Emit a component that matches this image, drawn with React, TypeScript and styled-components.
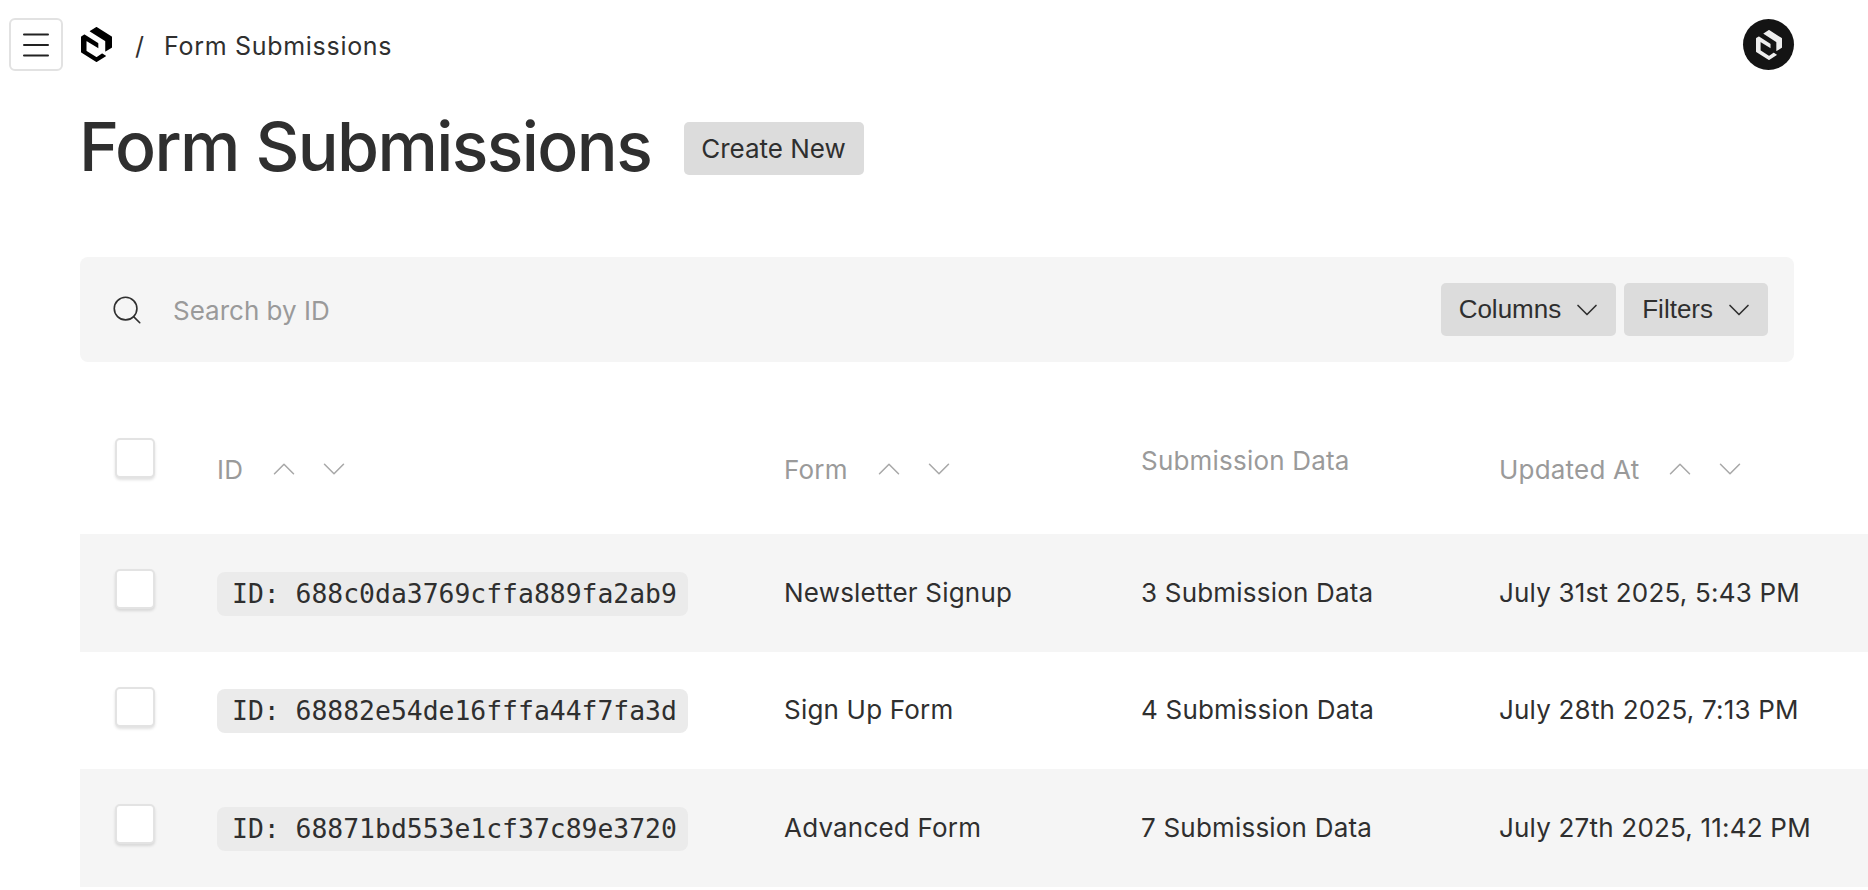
import React from "react";
import styled, { createGlobalStyle } from "styled-components";
import { ChevronDown, ChevronUp, Menu, Search } from "lucide-react";

const rows = [
  { id: "688c0da3769cffa889fa2ab9", form: "Newsletter Signup", data: "3 Submission Data", updated: "July 31st 2025, 5:43 PM" },
  { id: "68882e54de16fffa44f7fa3d", form: "Sign Up Form", data: "4 Submission Data", updated: "July 28th 2025, 7:13 PM" },
  { id: "68871bd553e1cf37c89e3720", form: "Advanced Form", data: "7 Submission Data", updated: "July 27th 2025, 11:42 PM" },
];

function Logo({ width, height }: { width: number; height: number }) {
  return (
    <svg width={width} height={height} viewBox="0 0 24 24.8" preserveAspectRatio="none" fill="currentColor">
      <path d="M11.8673 21.2336L4.40922 16.9845C4.31871 16.9309 4.25837 16.8355 4.25837 16.7282V10.1609C4.25837 10.0477 4.38508 9.97616 4.48162 10.0298L13.1404 14.9642C13.2611 15.0358 13.4121 14.9464 13.4121 14.8093V11.6091C13.4121 11.4839 13.3456 11.3647 13.2309 11.2992L2.81956 5.36353C2.71697 5.30394 2.58422 5.30394 2.48163 5.36353L0.167303 6.68231C0.0647047 6.74191 0 6.85513 0 6.97432V17.7994C0 17.9186 0.0647047 18.0318 0.167303 18.0914L11.8311 24.7389C11.9337 24.7985 12.0665 24.7985 12.1691 24.7389L19.2713 20.6924C19.3799 20.6328 19.3799 20.4778 19.2713 20.4122L16.5317 18.8479C16.4291 18.7883 16.2964 18.7883 16.1938 18.8479L12.2053 21.2336C12.1027 21.2932 11.9699 21.2932 11.8673 21.2336Z" />
      <path d="M23.8327 6.68231L12.1629 0.0447858C12.0603 -0.0148 11.9276 -0.0148 11.825 0.0447858L6.86639 2.8739C6.7578 2.9335 6.7578 3.08846 6.86639 3.15401L18.6057 9.8372C18.7024 9.89679 18.7626 9.99612 18.7626 10.1094V17.2751C18.7626 17.4064 18.9075 17.4898 19.0221 17.4242L23.8327 14.6785C23.9353 14.6189 24 14.5116 24 14.3924V6.97432C24 6.85513 23.9353 6.74191 23.8327 6.68231Z" />
    </svg>
  );
}

function SortButtons() {
  return (
    <SortGroup>
      <ChevronUp size={38} strokeWidth={0.95} />
      <ChevronDown size={38} strokeWidth={0.95} />
    </SortGroup>
  );
}

export default function App() {
  return (
    <>
      <GlobalStyle />
      <Page>
        <TopBar>
          <MenuButton>
            <Menu size={36} strokeWidth={1.35} />
          </MenuButton>
          <LogoLink>
            <Logo width={31} height={35} />
          </LogoLink>
          <Slash>/</Slash>
          <Crumb>Form Submissions</Crumb>
          <Avatar>
            <Logo width={26} height={30} />
          </Avatar>
        </TopBar>
        <Main>
          <TitleRow>
            <Title>Form Submissions</Title>
            <CreateButton>Create New</CreateButton>
          </TitleRow>
          <SearchBar>
            <Search size={34} strokeWidth={1.15} />
            <SearchText>Search by ID</SearchText>
            <PillButton>
              Columns <ChevronDown size={36} strokeWidth={1.1} />
            </PillButton>
            <PillButton>
              Filters <ChevronDown size={36} strokeWidth={1.1} />
            </PillButton>
          </SearchBar>
          <Table>
            <HeadRow>
              <CheckCell $head>
                <CheckBox />
              </CheckCell>
              <HeadCell>
                ID <SortButtons />
              </HeadCell>
              <HeadCell>
                Form <SortButtons />
              </HeadCell>
              <PlainHead>Submission Data</PlainHead>
              <HeadCell>
                Updated At <SortButtons />
              </HeadCell>
            </HeadRow>
            {rows.map((row) => (
              <Row key={row.id}>
                <CheckCell>
                  <CheckBox />
                </CheckCell>
                <Cell>
                  <IdCode>ID: {row.id}</IdCode>
                </Cell>
                <Cell>{row.form}</Cell>
                <Cell>{row.data}</Cell>
                <Cell>{row.updated}</Cell>
              </Row>
            ))}
          </Table>
        </Main>
      </Page>
    </>
  );
}

const GlobalStyle = createGlobalStyle`
  html, body {
    margin: 0;
    padding: 0;
    height: 100%;
    overflow: hidden;
    background: #fff;
    color: #2f2f2f;
    font-family: Inter, "Liberation Sans", sans-serif;
  }
`;

const Page = styled.div`
  width: 1868px;
  height: 890px;
  overflow: hidden;
`;

const TopBar = styled.header`
  display: flex;
  align-items: center;
  height: 89px;
  padding: 0 74px 0 9px;
  box-sizing: border-box;
`;

const MenuButton = styled.div`
  display: flex;
  align-items: center;
  justify-content: center;
  width: 54px;
  height: 53px;
  box-sizing: border-box;
  border: 2px solid #e2e2e2;
  border-radius: 6px;
  color: #222;
`;

const LogoLink = styled.div`
  display: flex;
  margin-left: 18px;
  color: #000;
`;

const Slash = styled.span`
  margin-left: 23px;
  padding-top: 2px;
  font-size: 25px;
`;

const Crumb = styled.span`
  margin-left: 20px;
  padding-top: 2px;
  font-size: 25px;
  letter-spacing: 0.7px;
`;

const Avatar = styled.div`
  display: flex;
  align-items: center;
  justify-content: center;
  width: 51px;
  height: 51px;
  margin-left: auto;
  border-radius: 50%;
  background: #141414;
  color: #eee;
`;

const Main = styled.main`
  padding: 21px 0 0 79px;
`;

const TitleRow = styled.div`
  display: flex;
  align-items: center;
  gap: 33px;
`;

const Title = styled.h1`
  margin: 0;
  font-size: 68px;
  line-height: 72px;
  font-weight: 500;
  letter-spacing: -1.6px;
`;

const CreateButton = styled.div`
  display: flex;
  align-items: center;
  height: 53px;
  margin-top: 5px;
  padding: 0 18px 0 17px;
  border-radius: 5px;
  background: #dcdcdc;
  font-size: 26px;
`;

const SearchBar = styled.div`
  display: flex;
  align-items: center;
  gap: 8px;
  width: 1714px;
  height: 105px;
  margin: 75px 0 0 1px;
  padding: 0 26px 0 30px;
  box-sizing: border-box;
  border-radius: 8px;
  background: #f5f5f5;
`;

const SearchText = styled.span`
  flex: 1;
  margin-left: 21px;
  padding-top: 2px;
  font-size: 26px;
  color: #9a9a9a;
`;

const PillButton = styled.div`
  display: flex;
  align-items: center;
  gap: 8px;
  height: 53px;
  padding: 0 11px 0 18px;
  box-sizing: border-box;
  border-radius: 5px;
  background: #dcdcdc;
  font-family: "Liberation Sans", sans-serif;
  font-size: 26px;
`;

const Table = styled.div`
  margin: 76px 0 0 1px;
  width: 1788px;
`;

const gridColumns = "137px 567px 357px 358px 1fr";

const HeadRow = styled.div`
  display: grid;
  grid-template-columns: ${gridColumns};
  height: 96px;
  color: #9a9a9a;
  font-size: 26px;
  letter-spacing: 0.2px;
`;

const Row = styled.div`
  display: grid;
  grid-template-columns: ${gridColumns};
  align-items: center;
  height: 117.5px;
  font-size: 26px;
  letter-spacing: 0.2px;
  &:nth-child(even) {
    background: #f5f5f5;
  }
`;

const CheckCell = styled.div<{ $head?: boolean }>`
  padding-left: 35px;
  align-self: start;
  padding-top: ${(p) => (p.$head ? "0" : "35px")};
`;

const CheckBox = styled.div`
  width: 40px;
  height: 40px;
  box-sizing: border-box;
  border: 2px solid #e3e3e3;
  border-radius: 5px;
  background: #fff;
  box-shadow: 0 2px 3px rgba(0, 0, 0, 0.12);
`;

const HeadCell = styled.div`
  display: flex;
  align-items: center;
  height: 62px;
  gap: 22px;
`;

const PlainHead = styled.div`
  padding-top: 8px;
  line-height: 30px;
`;

const SortGroup = styled.span`
  display: flex;
  gap: 12px;
  color: #a8a8a8;
`;

const Cell = styled.div`
  white-space: nowrap;
  margin-top: -1px;
`;

const IdCode = styled.code`
  display: inline-block;
  margin-top: 3px;
  padding: 6px 11px 6px 15px;
  border-radius: 8px;
  background: #ebebeb;
  font-family: "DejaVu Sans Mono", monospace;
  font-size: 26.4px;
  line-height: 32px;
  letter-spacing: 0;
`;
